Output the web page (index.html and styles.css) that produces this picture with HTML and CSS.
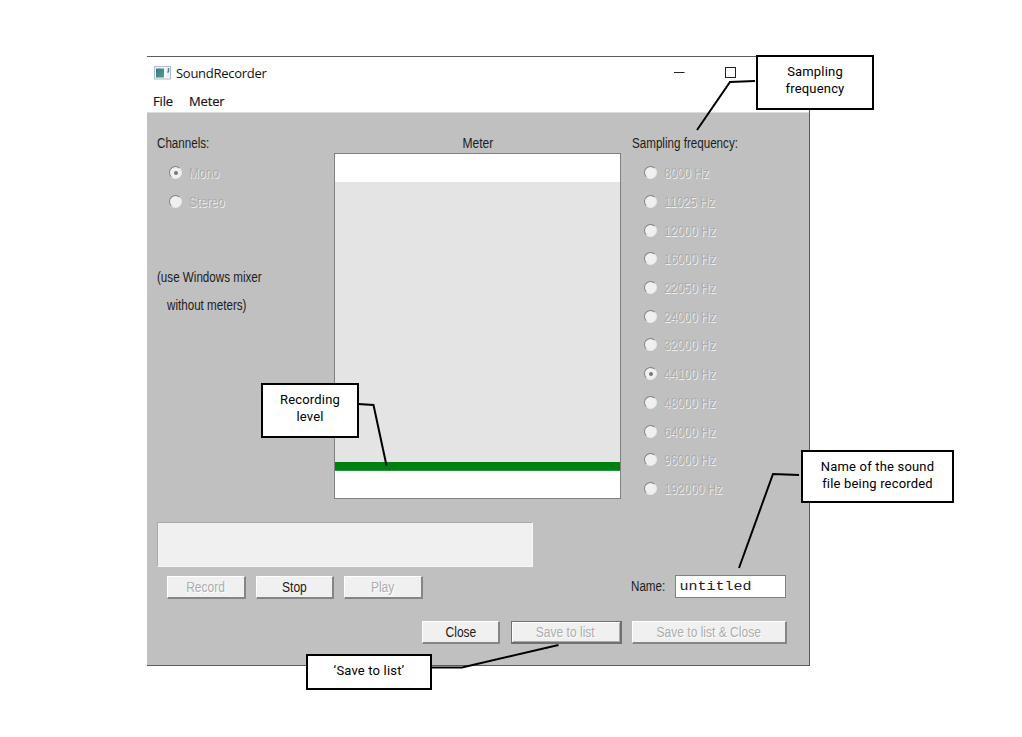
FILE: index.html
```
<!DOCTYPE html>
<html lang="en">
<head>
<meta charset="utf-8">
<title>SoundRecorder</title>
<link rel="stylesheet" href="styles.css">
</head>
<body>
<main class="figure">
  <section class="window">
    <header class="titlebar">
      <svg class="app-icon" width="17" height="14" viewBox="0 0 17 14"><defs><linearGradient id="g" x1="0" y1="0" x2="1" y2="1"><stop offset="0" stop-color="#3f6f9c"/><stop offset="1" stop-color="#4fa773"/></linearGradient></defs><rect x=".5" y=".5" width="16" height="12.5" fill="#f1f3f5" stroke="#b3bcc5"/><rect x="2" y="2.5" width="8" height="9" fill="url(#g)"/><path d="M11 2V12" stroke="#fff"/><path d="M14.5 2v3.500l-1 1" stroke="#4d8798" stroke-width="1.500" fill="none"/></svg>
      <h1 class="title">SoundRecorder</h1>
      <svg class="controls" width="64" height="12" viewBox="0 0 64 12" fill="none" stroke="#222"><path d="M1 5.500H11.500"/><rect x="52.500" y=".5" width="10" height="10"/></svg>
    </header>
    <nav class="menu"><span>File</span><span>Meter</span></nav>
    <div class="client">
      <div class="upper">
        <div class="channels">
          <div class="row head"><span class="t label">Channels:</span></div>
          <div class="row option"><i class="radio on"></i><span class="t off">Mono</span></div>
          <div class="row option"><i class="radio"></i><span class="t off">Stereo</span></div>
          <div class="row note"><span class="t label">(use Windows mixer</span></div>
          <div class="row indent"><span class="t label">without meters)</span></div>
        </div>
        <div class="meter">
          <div class="meter-label"><span class="t mid">Meter</span></div>
          <div class="meter-box"><div class="range"></div><div class="level"></div></div>
        </div>
        <div class="rates">
          <div class="row head"><span class="t label">Sampling frequency:</span></div>
          <div class="row option"><i class="radio"></i><span class="t off">8000 Hz</span></div>
          <div class="row option"><i class="radio"></i><span class="t off">11025 Hz</span></div>
          <div class="row option"><i class="radio"></i><span class="t off">12000 Hz</span></div>
          <div class="row option"><i class="radio"></i><span class="t off">16000 Hz</span></div>
          <div class="row option"><i class="radio"></i><span class="t off">22050 Hz</span></div>
          <div class="row option"><i class="radio"></i><span class="t off">24000 Hz</span></div>
          <div class="row option"><i class="radio"></i><span class="t off">32000 Hz</span></div>
          <div class="row option"><i class="radio on"></i><span class="t off">44100 Hz</span></div>
          <div class="row option"><i class="radio"></i><span class="t off">48000 Hz</span></div>
          <div class="row option"><i class="radio"></i><span class="t off">64000 Hz</span></div>
          <div class="row option"><i class="radio"></i><span class="t off">96000 Hz</span></div>
          <div class="row option"><i class="radio"></i><span class="t off">192000 Hz</span></div>
        </div>
      </div>
      <div class="display"></div>
      <div class="transport">
        <div class="btn disabled"><span class="t mid">Record</span></div>
        <div class="btn"><span class="t mid">Stop</span></div>
        <div class="btn disabled"><span class="t mid">Play</span></div>
        <div class="name"><span class="t label">Name:</span></div>
        <div class="field"><span class="value">untitled</span></div>
      </div>
      <div class="actions">
        <div class="btn"><span class="t mid">Close</span></div>
        <div class="btn disabled default"><span class="t mid">Save to list</span></div>
        <div class="btn disabled wide"><span class="t mid">Save to list &amp; Close</span></div>
      </div>
    </div>
  </section>
  <svg class="leaders" width="1022" height="737" viewBox="0 0 1022 737" fill="none" stroke="#000" stroke-width="2">
    <path d="M755 81L730 82L697 130"/>
    <path d="M358 404L373.500 405L386.500 465.500"/>
    <path d="M799 475L773 474L739 568"/>
    <path d="M432 667.500H462L558.500 645"/>
  </svg>
  <div class="callout c-frequency">Sampling<br>frequency</div>
  <div class="callout c-level">Recording<br>level</div>
  <div class="callout c-name">Name of the sound<br>file being recorded</div>
  <div class="callout c-save">‘Save to list’</div>
</main>
</body>
</html>
```
FILE: styles.css
```
* { box-sizing: border-box; }
body { margin: 0; background: #fff; font-family: "Liberation Sans", Arial, sans-serif; color: #1c1c1c; }
.figure { position: relative; width: 1022px; height: 737px; padding: 56px 0 0 147px; overflow: hidden; }
.window { width: 663px; height: 610px; border: solid #5c5c5c; border-width: 1px 1px 1px 0; background: #fff; }
.titlebar { display: flex; align-items: center; height: 33px; padding: 0 72px 2px 7px; }
.app-icon { margin-right: 5px; }
.title { margin: 0; font: 13px "Open Sans", sans-serif; letter-spacing: -.28px; color: #111; }
.controls { margin-left: auto; }
.menu { display: flex; gap: 16px; height: 22px; padding-left: 6px; font: 13px/22px "Open Sans", sans-serif; letter-spacing: -.15px; color: #1b1318; -webkit-text-stroke: .2px; }
.client { height: 553px; padding: 17px 0 0 10px; background: #c0c0c0; border-top: 1px solid #dcdcdc; }
.upper { display: grid; grid-template-columns: 177px 287px 1fr; height: 392px; }
.row { display: flex; align-items: center; height: 28.730px; }
.head { padding-bottom: 3px; }
.option { padding-left: 12px; }
.note { margin-top: 46px; }
.indent { padding-left: 10px; }
.rates { padding-left: 11px; }
.t { display: inline-block; font-size: 14px; line-height: 16px; white-space: nowrap; transform: scaleX(.86); transform-origin: left center; }
.label { transform: scaleX(.83); }
.mid { transform-origin: center; }
.off { color: #acacac; text-shadow: 1px 1px 0 #eee; }
.radio { position: relative; flex: none; width: 13px; height: 13px; margin: -1px 7px 0 0; border: 1.500px solid; border-color: #808080 #e8e8e8 #e8e8e8 #808080; border-radius: 50%; background: #f0f0f0; }
.on::after { content: ""; position: absolute; left: 3.500px; top: 3.500px; width: 4px; height: 4px; border-radius: 50%; background: #777; }
.meter-label { display: flex; justify-content: center; align-items: center; height: 23px; padding-top: 3px; }
.meter-box { display: flex; flex-direction: column; height: 346px; padding-top: 28px; border: 1px solid #808080; background: #fff; }
.range { height: 280px; background: #e4e4e4; }
.level { height: 9px; background: #008010; border-bottom: 1px solid #28943a; }
.display { width: 376px; height: 45px; border: 1px solid; border-color: #aaa #f8f8f8 #f8f8f8 #aaa; background: #f0f0f0; }
.transport { display: flex; height: 54px; padding: 9px 0 0 10px; gap: 10px; }
.btn { display: flex; justify-content: center; align-items: center; width: 78.500px; height: 23px; background: #f0f0f0; border: solid; border-width: 1px 2px 2px 1px; border-color: #fff #858585 #858585 #fff; }
.disabled { color: #adadad; text-shadow: 1px 1px 0 #fff; }
.name { display: flex; align-items: center; width: 34px; height: 20px; margin-left: 198px; }
.field { width: 111px; height: 23px; margin-top: -1px; padding-left: 4px; border: 1px solid #808080; background: #fff; font: 15px/22px "Liberation Mono", monospace; color: #20202a; }
.value { display: inline-block; font: 15px/21px "Liberation Mono", monospace; transform: scaleY(.9); }
.actions { display: flex; padding-left: 265px; gap: 10.500px; }
.actions .btn { width: 78px; }
.actions .default { width: 111px; border: solid #707070; border-width: 1px 2px 2px 1px; box-shadow: inset 1px 1px #fff, inset -1px -1px #aaa; }
.actions .wide { width: 155px; }
.leaders { position: absolute; left: 0; top: 0; }
.callout { position: absolute; border: 2px solid #000; background: #fff; text-align: center; font: 13px/17px Roboto, sans-serif; letter-spacing: .18px; color: #000; padding-top: 6px; white-space: nowrap; }
.c-frequency { left: 756px; top: 55px; width: 118px; height: 55px; }
.c-level { left: 261px; top: 383px; width: 98px; height: 55px; }
.c-name { left: 801px; top: 450px; width: 153px; height: 53px; }
.c-save { left: 306px; top: 654px; width: 126px; height: 36px; }
```
